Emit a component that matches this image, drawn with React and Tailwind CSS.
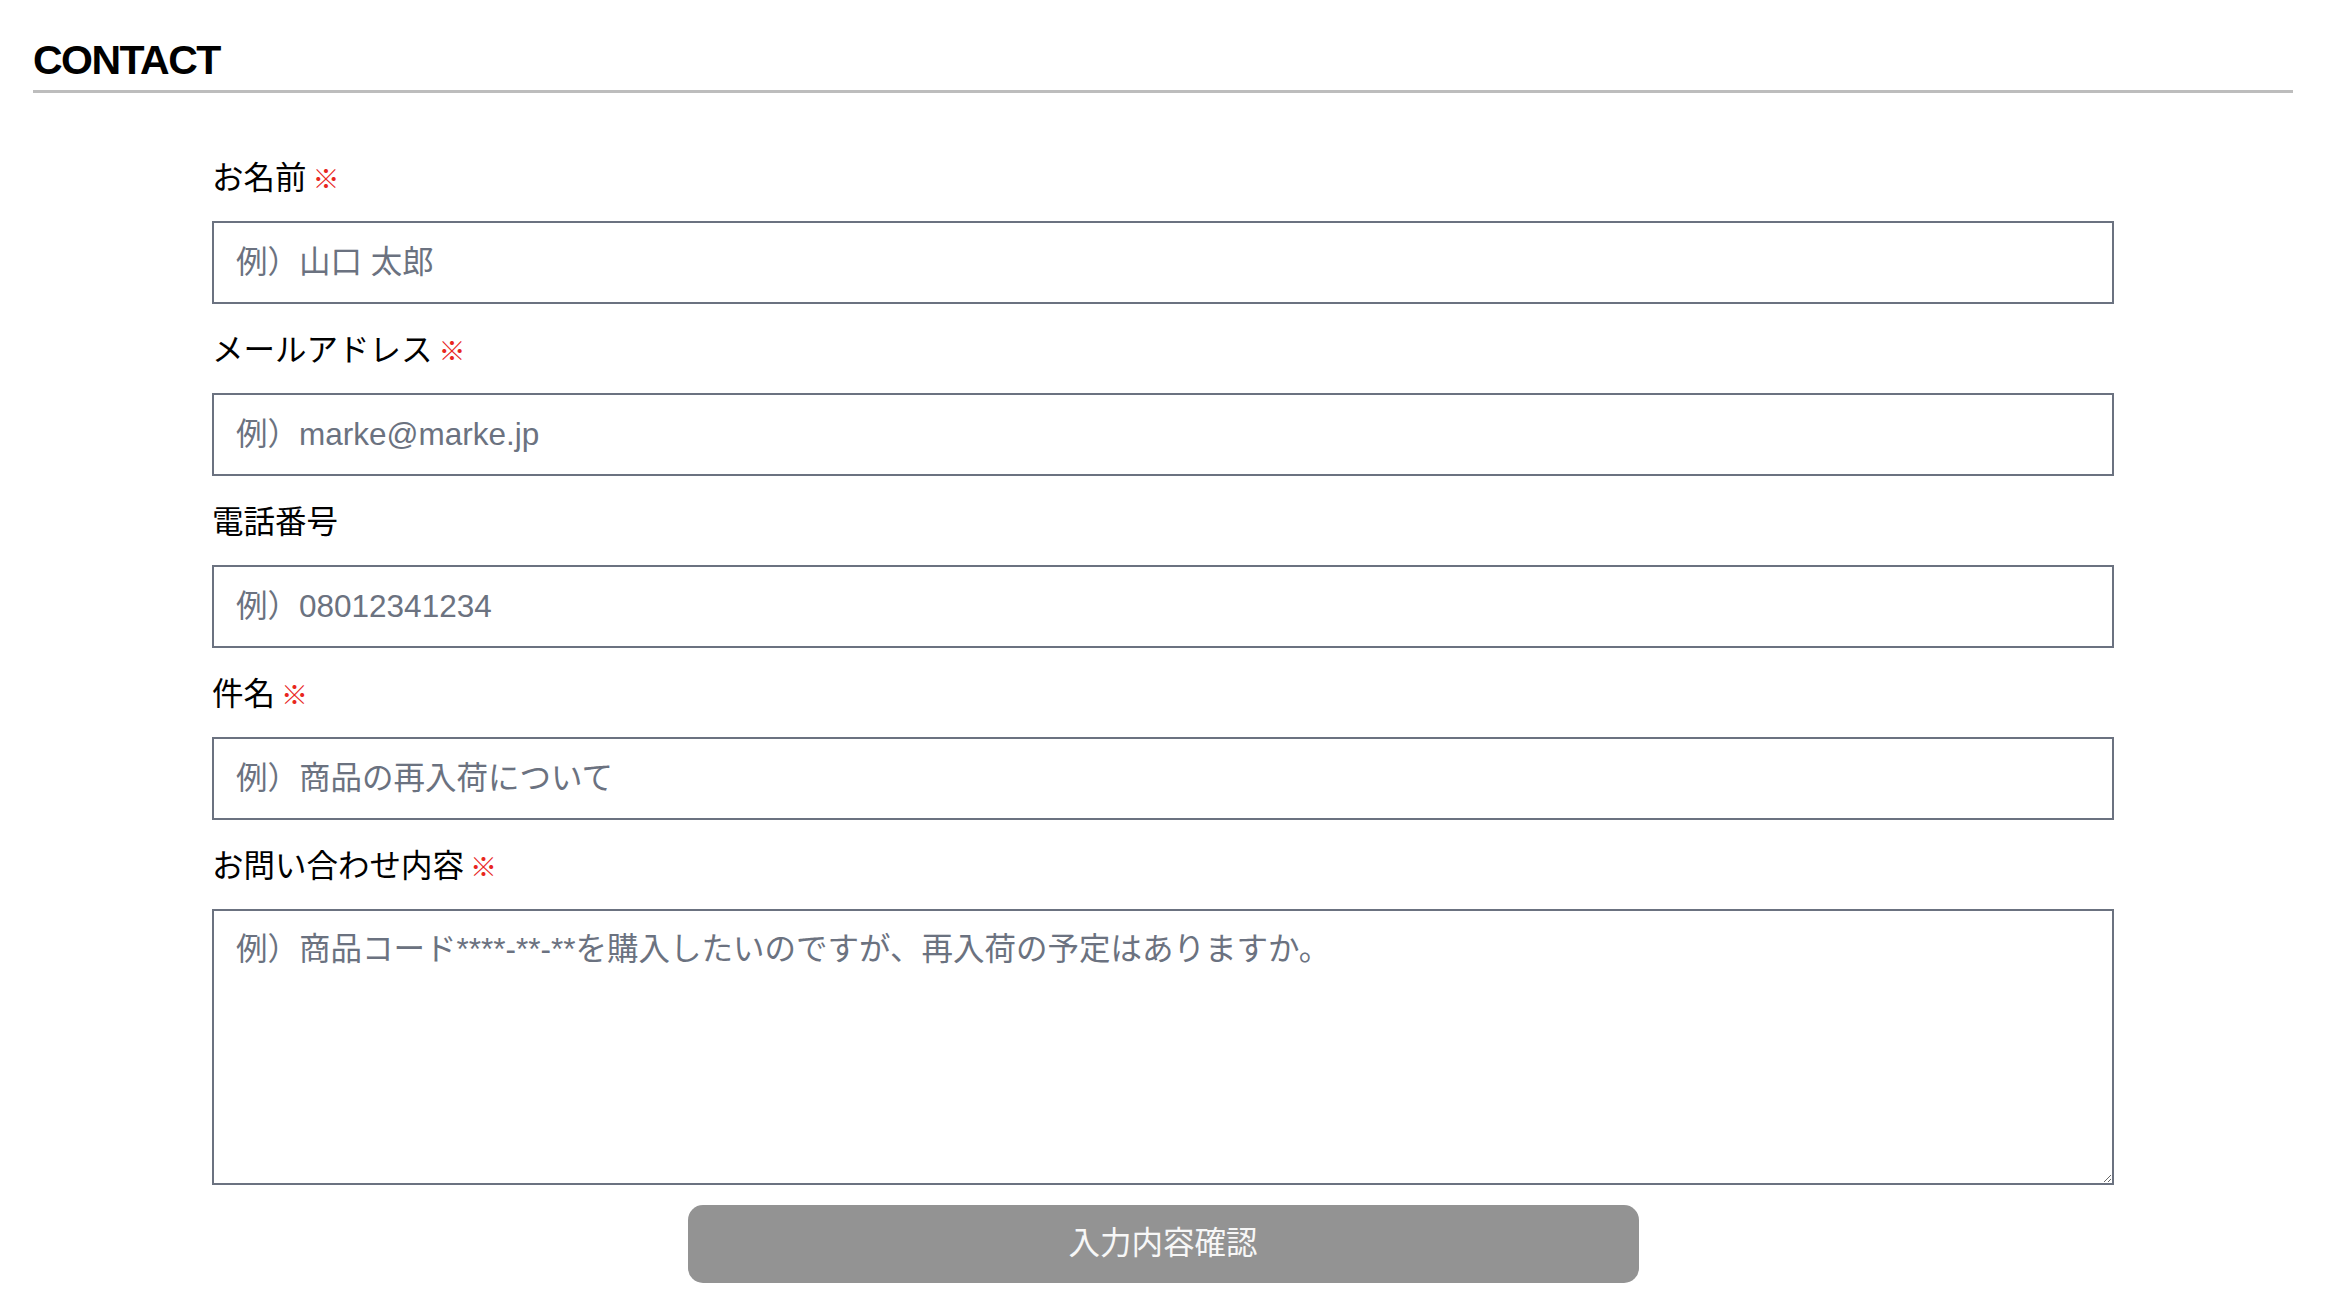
import React from 'react';

const fields = [
  { id: 'name', label: 'お名前', required: true, placeholder: '例）山口 太郎', type: 'text' },
  { id: 'email', label: 'メールアドレス', required: true, placeholder: '例）marke@marke.jp', type: 'email' },
  { id: 'tel', label: '電話番号', required: false, placeholder: '例）08012341234', type: 'tel' },
  { id: 'subject', label: '件名', required: true, placeholder: '例）商品の再入荷について', type: 'text' },
];

const Label = ({ htmlFor, children, required }) => (
  <label htmlFor={htmlFor} className="block text-[31.5px] leading-[47px] text-black mb-[19px]">
    {children}
    {required && <span className="ml-[6px] text-[27px] leading-none font-black text-[#e8261d]">※</span>}
  </label>
);

export default function App() {
  return (
    <div className="min-h-screen bg-white pl-[33px] pr-[45px] pt-[40px] font-['Liberation_Sans','Noto_Sans_CJK_JP',sans-serif]">
      <h2 className="text-[41px] font-bold leading-none tracking-[-1.5px] text-black pb-[9px] border-b-[3px] border-[#bdbdbd] font-['Liberation_Sans',Arial,sans-serif]">
        CONTACT
      </h2>

      <form className="px-[179px] pt-[62px] flex flex-col gap-[23px]" onSubmit={(e) => e.preventDefault()}>
        {fields.map((f) => (
          <div key={f.id}>
            <Label htmlFor={f.id} required={f.required}>{f.label}</Label>
            <input
              id={f.id}
              type={f.type}
              placeholder={f.placeholder}
              className="block w-full h-[83px] border-2 border-[#6b7280] bg-white px-[22px] text-[31.5px] text-black placeholder:text-[#6b7280] outline-none rounded-none"
            />
          </div>
        ))}

        <div>
          <Label htmlFor="message" required>お問い合わせ内容</Label>
          <textarea
            id="message"
            placeholder="例）商品コード****-**-**を購入したいのですが、再入荷の予定はありますか。"
            className="block w-full h-[276px] border-2 border-[#6b7280] bg-white px-[22px] pt-[15px] text-[31.5px] leading-[47px] text-black placeholder:text-[#6b7280] outline-none rounded-none"
          />
        </div>

        <button
          type="submit"
          className="block w-1/2 mx-auto -mt-[3px] h-[78px] rounded-[15px] bg-[#939393] text-[31.5px] text-[#f7f7f7]"
        >
          入力内容確認
        </button>
      </form>
    </div>
  );
}
